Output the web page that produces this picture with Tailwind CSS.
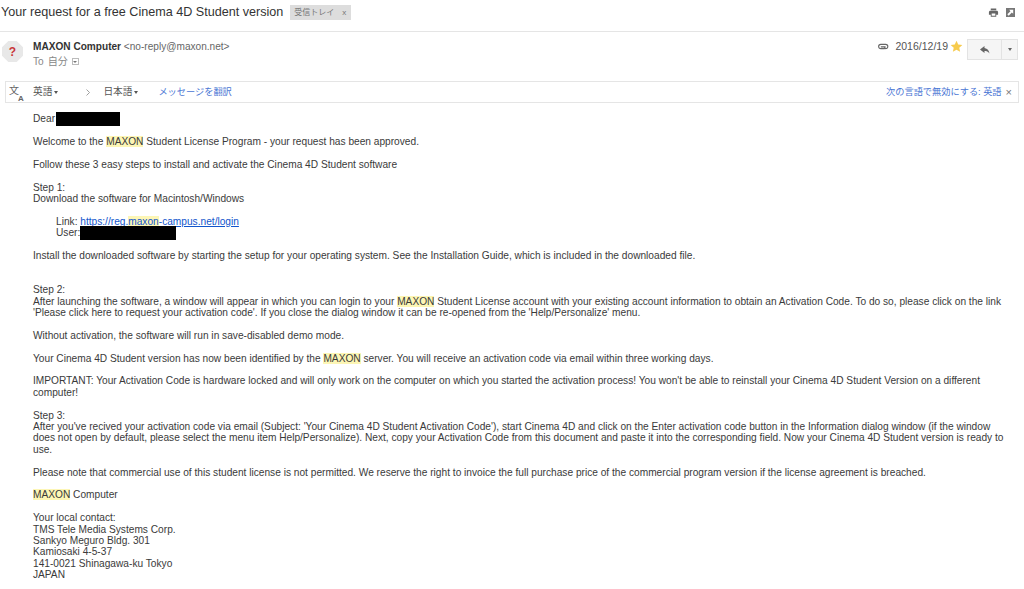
<!DOCTYPE html>
<html lang="en">
<head>
    <meta charset="UTF-8">
    <title>Your request for a free Cinema 4D Student version</title>
    <script src="https://cdn.jsdelivr.net/npm/@tailwindcss/browser@4"></script>
</head>
<body class="bg-white w-[1024px] h-[589px] overflow-hidden font-['Liberation_Sans','Noto_Sans_CJK_JP',sans-serif] text-[#333]">

    <!-- Subject -->
    <div class="h-[32px] flex items-center border-b border-[#e5e5e5] pl-[1px] pr-[9px] pb-[6px]">
        <h1 class="text-[12.6px] text-[#333] font-normal">Your request for a free Cinema 4D Student version</h1>
        <span class="ml-[7px] w-[61px] h-[15px] bg-[#ddd] flex items-center justify-between px-[4px] text-[8px] text-[#777]"><span>受信トレイ</span><span class="pr-[1px]">x</span></span>
        <div class="ml-auto flex items-center gap-[7px]">
            <svg class="w-[11px] h-[11px]" viewBox="0 0 24 24" fill="#666"><path d="M19 8H5c-1.66 0-3 1.34-3 3v6h4v4h12v-4h4v-6c0-1.66-1.34-3-3-3zm-3 11H8v-5h8v5zM18 3H6v4h12V3z"/></svg>
            <svg class="w-[9px] h-[9px]" viewBox="0 0 10 10"><rect width="10" height="10" fill="#777"/><path d="M3.500 2H8v4.500L6.500 5 3 8.500 1.500 7 5 3.500z" fill="#fff"/></svg>
        </div>
    </div>

    <!-- Sender -->
    <div class="h-[48px] flex pl-[2px] pr-[6px]">
        <div class="w-[21px] h-[21px] mt-[9px] bg-[#e8e8e8] [clip-path:polygon(30%_0,70%_0,100%_30%,100%_70%,70%_100%,30%_100%,0_70%,0_30%)] flex items-center justify-center text-[12px] font-bold text-[#c8363a]">?</div>
        <div class="ml-[10px] pt-[8px]">
            <div class="text-[10.1px] leading-[13px]"><span class="font-bold text-[#333]">MAXON Computer</span> <span class="text-[#666]">&lt;no-reply@maxon.net&gt;</span></div>
            <div class="mt-[2px] flex items-center text-[10.1px] leading-[13px] text-[#888]">
                <span>To</span><span class="ml-[4px]">自分</span>
                <span class="ml-[4px] w-[7px] h-[7px] border border-[#bbb] flex items-center justify-center"><span class="border-x-[2px] border-t-[2px] border-x-transparent border-t-[#777]"></span></span>
            </div>
        </div>
        <div class="ml-auto flex items-start pt-[7px]">
            <svg class="mt-[4px] w-[12px] h-[7px]" viewBox="0 0 12 8" fill="none" stroke="#666" stroke-width="1.300"><path d="M8 6.500H3.500a2.500 2.500 0 0 1 0-5H9a2 2 0 0 1 0 5 1 1 0 0 1 0-2H3.500"/></svg>
            <span class="ml-[6px] text-[10.5px] leading-[15px] text-[#555]">2016/12/19</span>
            <svg class="ml-[2px] mt-[1px] w-[13px] h-[13px]" viewBox="0 0 24 24" fill="#f7cb4d"><path d="M12 1.500l3.200 7 7.600.8-5.700 5.100 1.600 7.500L12 18l-6.700 3.900 1.600-7.500L1.200 9.300l7.600-.8z"/></svg>
            <div class="ml-[4px] h-[21px] flex border border-[#e3e3e3] bg-[#f5f5f5]">
                <div class="w-[34px] flex items-center justify-center border-r border-[#e3e3e3]">
                    <svg class="w-[10px] h-[8px]" viewBox="0 0 10 8" fill="#666"><path d="M4.500 0L0 3.500 4.500 7V5c2 0 3.600.5 5 2.500C9 4.500 7.500 2.500 4.500 2z"/></svg>
                </div>
                <div class="w-[15px] flex items-center justify-center"><span class="border-x-[2.500px] border-t-[3px] border-x-transparent border-t-[#666]"></span></div>
            </div>
        </div>
    </div>

    <!-- Translate bar -->
    <div class="mx-[5px] mt-[1px] w-[1014px] h-[22px] border border-[#e5e5e5] flex items-center pt-[1px] text-[9.2px] text-[#555]">
        <svg class="ml-[3px] w-[16px] h-[18px] shrink-0" viewBox="0 0 16 18" fill="#666"><text x="0" y="10" font-size="10">文</text><text x="9" y="17" font-size="8" font-weight="bold">A</text></svg>
        <span class="ml-[8px] flex items-center gap-[2px] text-[9.7px]">英語<span class="border-x-[2.500px] border-t-[3px] border-x-transparent border-t-[#555]"></span></span>
        <svg class="ml-[28px] w-[4px] h-[7px]" viewBox="0 0 4 7" fill="none" stroke="#888" stroke-width=".8"><path d="M.5.500l3 3-3 3"/></svg>
        <span class="ml-[13px] flex items-center gap-[2px] text-[9.7px]">日本語<span class="border-x-[2.500px] border-t-[3px] border-x-transparent border-t-[#555]"></span></span>
        <span class="ml-[20px] text-[#4a76d4]">メッセージを翻訳</span>
        <span class="ml-auto text-[#4a76d4]">次の言語で無効にする: 英語</span>
        <span class="ml-[4px] mr-[6px] text-[11px] leading-none text-[#777]">×</span>
    </div>

    <!-- Body -->
    <div class="pl-[33px] pr-[15px] pt-[10.2px] text-[10.16px] leading-[11.4px] text-[#3a3a3a]">
        <p class="flex items-center h-[11.4px]">Dear<span class="ml-[1px] w-[64px] h-[14px] bg-black"></span></p>
        <p class="mt-[11.4px]">Welcome to the <mark class="bg-[#fdf6b5] text-inherit">MAXON</mark> Student License Program - your request has been approved.</p>
        <p class="mt-[11.4px]">Follow these 3 easy steps to install and activate the Cinema 4D Student software</p>
        <p class="mt-[11.4px]">Step 1:<br>Download the software for Macintosh/Windows</p>
        <div class="mt-[11.4px] pl-[23px]">
            <p>Link: <a class="text-[#1155cc] underline">https://reg.<mark class="bg-[#fdf6b5] text-inherit">maxon</mark>-campus.net/login</a></p>
            <p class="flex items-center h-[11.4px]">User:<span class="w-[96px] h-[14px] bg-black"></span></p>
        </div>
        <p class="mt-[11.4px]">Install the downloaded software by starting the setup for your operating system. See the Installation Guide, which is included in the downloaded file.</p>
        <p class="mt-[22.8px]">Step 2:<br>After launching the software, a window will appear in which you can login to your <mark class="bg-[#fdf6b5] text-inherit">MAXON</mark> Student License account with your existing account information to obtain an Activation Code. To do so, please click on the link<br>'Please click here to request your activation code'. If you close the dialog window it can be re-opened from the 'Help/Personalize' menu.</p>
        <p class="mt-[11.4px]">Without activation, the software will run in save-disabled demo mode.</p>
        <p class="mt-[11.4px]">Your Cinema 4D Student version has now been identified by the <mark class="bg-[#fdf6b5] text-inherit">MAXON</mark> server. You will receive an activation code via email within three working days.</p>
        <p class="mt-[11.4px]">IMPORTANT: Your Activation Code is hardware locked and will only work on the computer on which you started the activation process! You won't be able to reinstall your Cinema 4D Student Version on a different<br>computer!</p>
        <p class="mt-[11.4px]">Step 3:<br>After you've recived your activation code via email (Subject: 'Your Cinema 4D Student Activation Code'), start Cinema 4D and click on the Enter activation code button in the Information dialog window (if the window<br>does not open by default, please select the menu item Help/Personalize). Next, copy your Activation Code from this document and paste it into the corresponding field. Now your Cinema 4D Student version is ready to<br>use.</p>
        <p class="mt-[11.4px]">Please note that commercial use of this student license is not permitted. We reserve the right to invoice the full purchase price of the commercial program version if the license agreement is breached.</p>
        <p class="mt-[11.4px]"><mark class="bg-[#fdf6b5] text-inherit">MAXON</mark> Computer</p>
        <p class="mt-[11.4px]">Your local contact:<br>TMS Tele Media Systems Corp.<br>Sankyo Meguro Bldg. 301<br>Kamiosaki 4-5-37<br>141-0021 Shinagawa-ku Tokyo<br>JAPAN</p>
    </div>
</body>
</html>
